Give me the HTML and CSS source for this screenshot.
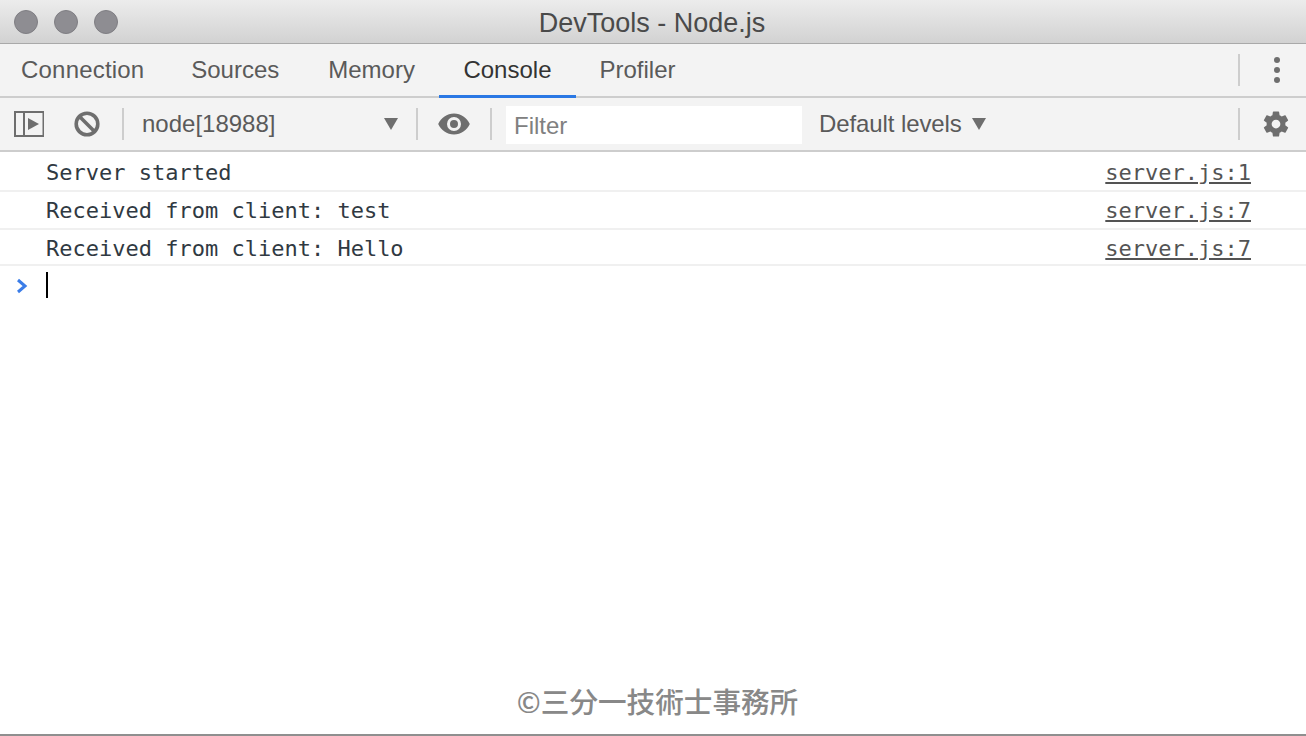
FILE: index.html
```html
<!DOCTYPE html>
<html lang="ja">
<head>
<meta charset="utf-8">
<title>DevTools - Node.js</title>
<link rel="stylesheet" href="styles.css">
</head>
<body>
<div class="window">
  <header class="titlebar">
    <div class="lights"><span class="light"></span><span class="light"></span><span class="light"></span></div>
    <div class="title">DevTools - Node.js</div>
  </header>
  <nav class="tabs">
    <span class="tab tab-connection">Connection</span>
    <span class="tab">Sources</span>
    <span class="tab">Memory</span>
    <span class="tab active">Console</span>
    <span class="tab tab-profiler">Profiler</span>
    <span class="spacer"></span>
    <span class="divider"></span>
    <svg class="kebab" width="8" height="28" viewBox="0 0 8 28"><circle cx="4" cy="4" r="3"/><circle cx="4" cy="14" r="3"/><circle cx="4" cy="24" r="3"/></svg>
  </nav>
  <div class="toolbar">
    <svg class="ic-sidebar" width="30" height="26" viewBox="0 0 30 26" fill="none"><path d="M1 1h28.500v24H1zM10 1v24" stroke="#6e6e6e" stroke-width="2"/><path d="M14 7l11 6-11 6z" fill="#6e6e6e"/></svg>
    <svg class="ic-clear" width="28" height="28" viewBox="0 0 28 28" fill="none" stroke="#6e6e6e" stroke-width="3.600"><circle cx="14" cy="14" r="10.800"/><path d="M6.500 6.500l15 15"/></svg>
    <span class="divider div-a"></span>
    <span class="context">node[18988]</span>
    <span class="arrow arrow-context"></span>
    <span class="divider div-b"></span>
    <svg class="ic-eye" width="32" height="22" viewBox="0 0 32 22"><path fill="#6e6e6e" fill-rule="evenodd" d="M16 0.500C9 .5 3 4.800 .2 11 3 17.200 9 21.500 16 21.500S29 17.200 31.800 11C29 4.800 23 .5 16 .5zM16 4a7 7 0 1 1 0 14 7 7 0 0 1 0-14zM16 7a4 4 0 1 0 0 8 4 4 0 0 0 0-8z"/></svg>
    <span class="divider div-c"></span>
    <div class="filter">Filter</div>
    <span class="levels">Default levels</span>
    <span class="arrow arrow-levels"></span>
    <span class="spacer"></span>
    <span class="divider"></span>
    <svg class="ic-gear" width="30" height="30" viewBox="0 0 24 24"><path fill="#6e6e6e" d="M19.430 12.980c.04-.32.070-.64.070-.98s-.03-.66-.07-.98l2.110-1.650c.19-.15.240-.42.120-.64l-2-3.460c-.12-.22-.39-.3-.61-.22l-2.490 1c-.52-.4-1.080-.73-1.690-.98l-.38-2.650C14.460 2.180 14.250 2 14 2h-4c-.25 0-.46.180-.49.420l-.38 2.650c-.61.25-1.170.59-1.690.98l-2.490-1c-.23-.09-.49 0-.61.220l-2 3.460c-.13.220-.07.490.12.640l2.110 1.650c-.04.320-.07.650-.07.980s.03.660.07.980l-2.110 1.650c-.19.150-.24.420-.12.640l2 3.460c.12.220.39.300.61.220l2.490-1c.52.400 1.080.730 1.690.980l.38 2.650c.03.240.24.420.49.420h4c.25 0 .46-.18.49-.42l.38-2.650c.61-.25 1.170-.59 1.690-.98l2.490 1c.23.090.49 0 .61-.22l2-3.460c.12-.22.070-.49-.12-.64l-2.110-1.650zM12 15.500c-1.930 0-3.500-1.570-3.500-3.500s1.570-3.500 3.500-3.500 3.500 1.570 3.500 3.500-1.570 3.500-3.500 3.500z"/></svg>
  </div>
  <main class="console">
    <div class="row row-first"><span class="msg">Server started</span><span class="src">server.js:1</span></div>
    <div class="row"><span class="msg">Received from client: test</span><span class="src">server.js:7</span></div>
    <div class="row row-last"><span class="msg">Received from client: Hello</span><span class="src">server.js:7</span></div>
    <div class="prompt">
      <svg class="chevron" width="12" height="16" viewBox="0 0 12 16" fill="none"><path d="M2 2l7 6-7 6" stroke="#3b7de8" stroke-width="3"/></svg>
      <span class="caret"></span>
    </div>
    <div class="watermark">©三分一技術士事務所</div>
  </main>
</div>
</body>
</html>
```
FILE: styles.css
```css
* { box-sizing: border-box; }
html, body { margin: 0; padding: 0; height: 100%; background: #fff; overflow: hidden; }
body { font-family: "Liberation Sans", Arial, sans-serif; }
.window { width: 1306px; height: 736px; display: flex; flex-direction: column; border-bottom: 2px solid #8f8f8f; }

.titlebar { height: 44px; flex: none; position: relative; display: flex; align-items: center; justify-content: center; background: linear-gradient(#ececec, #d2d2d2); border-bottom: 1px solid #a9a9a9; }
.lights { position: absolute; left: 14px; top: 10px; display: flex; gap: 16px; }
.light { width: 24px; height: 24px; border-radius: 50%; background: #8e8d92; border: 1px solid #7f7e83; }
.title { font-size: 27px; color: #4a4a4a; padding: 4px 2px 0 0; }

.tabs { height: 54px; flex: none; display: flex; align-items: stretch; background: #f3f3f3; border-bottom: 2px solid #cdcdcd; padding-right: 25px; }
.tab { display: flex; align-items: center; padding: 0 24.500px; font-size: 24px; color: #5a5a5a; height: 54px; padding-bottom: 2px; }
.tab-connection { padding-left: 21px; padding-right: 22.300px; letter-spacing: .2px; }
.tab.active { color: #333; border-bottom: 3px solid #2a78e4; padding: 0 24px; }
.tab-profiler { padding-left: 24px; }
.spacer { flex: 1; }
.divider { width: 2px; height: 32px; background: #cdcdcd; flex: none; align-self: center; }
.kebab { fill: #6e6e6e; align-self: center; margin-left: 33px; }

.toolbar { height: 54px; flex: none; display: flex; align-items: center; background: #f3f3f3; border-bottom: 2px solid #cdcdcd; padding-left: 14px; padding-right: 15px; }
.ic-clear { margin-left: 29px; }
.div-a { margin-left: 21px; }
.context { margin-left: 18px; font-size: 24px; color: #5a5a5a; width: 242px; }
.arrow { width: 0; height: 0; border-left: 7px solid transparent; border-right: 7px solid transparent; border-top: 12px solid #6e6e6e; flex: none; }
.div-b { margin-left: 18px; }
.ic-eye { margin-left: 20px; }
.div-c { margin-left: 20px; }
.filter { margin-left: 14px; margin-top: 2px; width: 296px; height: 38px; background: #fff; color: #808080; font-size: 24px; padding-left: 8px; line-height: 40px; }
.levels { margin-left: 17px; font-size: 24px; color: #5a5a5a; letter-spacing: -.1px; }
.arrow-levels { margin-left: 10px; }
.ic-gear { margin-left: 21px; }

.console { flex: 1; position: relative; font-family: "DejaVu Sans Mono", monospace; font-size: 22px; color: #303942; }
.row { height: 38px; display: flex; justify-content: space-between; align-items: center; padding: 0 55px 0 46px; border-bottom: 2px solid #f0f0f0; }
.row-first { height: 40px; padding-top: 2px; }
.row-last { height: 36px; padding-top: 2px; }
.msg { white-space: pre; }
.src { color: #545454; text-decoration: underline; }
.prompt { height: 38px; display: flex; align-items: center; padding-left: 16px; }
.chevron { margin-top: 2px; }
.caret { width: 2px; height: 26px; background: #000; margin-left: 18px; }
.watermark { position: absolute; left: 0; right: 0; top: 529px; padding-left: 9px; text-align: center; font-family: "Noto Sans CJK JP", sans-serif; font-size: 28.600px; font-weight: 500; color: #888; line-height: 40px; }
```
